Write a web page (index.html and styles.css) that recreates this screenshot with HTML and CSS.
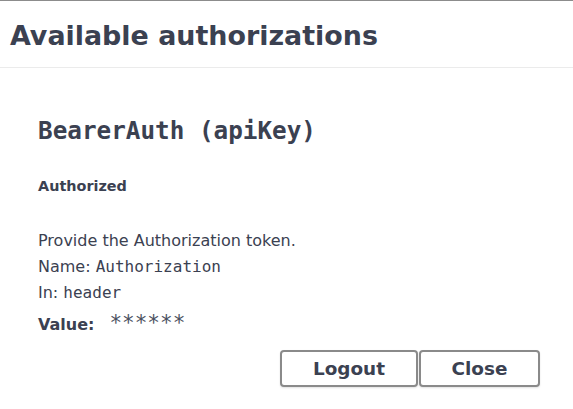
FILE: index.html
```html
<!DOCTYPE html>
<html>
<head>
<meta charset="utf-8">
<link rel="stylesheet" href="styles.css">
</head>
<body>
<div class="modal">
  <div class="modal-header">
    <h3 class="modal-title">Available authorizations</h3>
  </div>
  <div class="modal-body">
    <h4 class="scheme-title">BearerAuth (apiKey)</h4>
    <h6 class="status">Authorized</h6>
    <p class="line">Provide the Authorization token.</p>
    <p class="line">Name: <code class="code">Authorization</code></p>
    <p class="line">In: <code class="code">header</code></p>
    <p class="line value-line"><strong class="value-label">Value:</strong><code class="masked">******</code></p>
    <div class="actions">
      <button class="btn btn-logout">Logout</button>
      <button class="btn btn-close">Close</button>
    </div>
  </div>
</div>
</body>
</html>
```
FILE: styles.css
```css
html, body {
  margin: 0;
  padding: 0;
  background: #ffffff;
}
body {
  font-family: "DejaVu Sans", sans-serif;
  color: #3b4151;
}
.modal {
  border-top: 1px solid #8c8c8c;
  width: 573px;
  height: 408px;
  background: #fff;
}
.modal-header {
  border-bottom: 1px solid #ebebeb;
  padding: 19px 0 14.8px 10px;
}
.modal-title {
  margin: 0;
  font-size: 26.9px;
  line-height: 1.2;
  font-weight: bold;
  color: #3b4151;
}
.modal-body {
  padding: 0 0 0 38px;
}
.scheme-title {
  margin: 48.3px 0 0;
  font-family: "DejaVu Sans Mono", monospace;
  font-size: 24.3px;
  line-height: 1.2;
  font-weight: bold;
}
.status {
  margin: 32px 0 0;
  font-size: 14.4px;
  line-height: 1.2;
  font-weight: bold;
}
.line {
  margin: 0;
  font-size: 16px;
  line-height: 26px;
}
.status + .line {
  margin-top: 32.8px;
}
.code {
  font-family: "DejaVu Sans Mono", monospace;
  font-size: 16px;
}
.value-line {
  margin-top: 4px;
  display: flex;
  align-items: baseline;
}
.value-label {
  font-weight: bold;
}
.masked {
  font-family: "DejaVu Sans Mono", monospace;
  font-size: 21px;
  margin-left: 15px;
  line-height: 26px;
  color: #4a5060;
}
.actions {
  display: flex;
  justify-content: flex-end;
  gap: 1px;
  margin-top: 12px;
  padding-right: 33px;
}
.btn {
  height: 37px;
  border: 2px solid #8a8a8a;
  border-radius: 4px;
  background: #fff;
  box-shadow: 0 1px 2px rgba(0,0,0,0.12);
  font-family: "DejaVu Sans", sans-serif;
  font-size: 18.4px;
  font-weight: bold;
  color: #3b4151;
  padding: 0;
}
.btn-logout {
  width: 138px;
}
.btn-close {
  width: 121px;
}
```
